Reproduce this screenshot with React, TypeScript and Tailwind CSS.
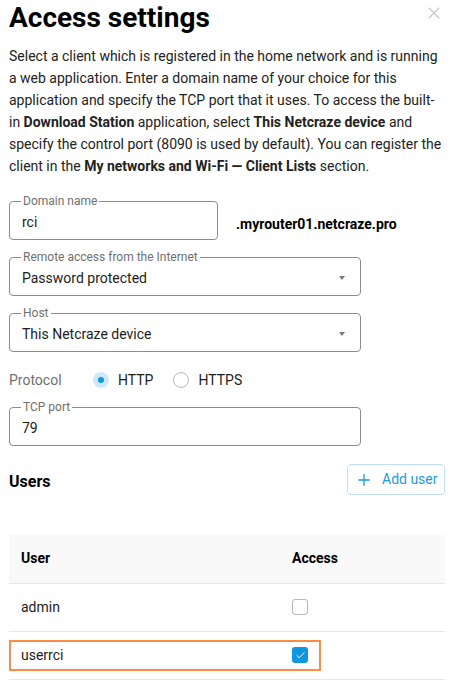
import { Plus, X, Check } from 'lucide-react';

const font = { fontFamily: 'Roboto, "Liberation Sans", sans-serif' };

function Outlined({ label, children, className = '' }: { label: string; children: React.ReactNode; className?: string }) {
  return (
    <fieldset className={`border border-[#8c8c8c] rounded-[4px] px-[12px] m-0 min-w-0 ${className}`}>
      <legend className="text-[12px] leading-[14px] text-[#6f6f6f] px-[2px] ml-[-1px]">{label}</legend>
      {children}
    </fieldset>
  );
}

function SelectField({ label, value }: { label: string; value: string }) {
  return (
    <Outlined label={label} className="w-[352px]">
      <div className="h-[31px] pb-[3px] flex items-center justify-between text-[14px] text-[#1c1c1c]">
        <span>{value}</span>
        <svg width="6" height="4" viewBox="0 0 6 4" className="mr-[3px]">
          <path d="M0 0h6L3 4z" fill="#7a7a7a" />
        </svg>
      </div>
    </Outlined>
  );
}

export default function App() {
  return (
    <div style={font} className="w-[452px] h-[686px] bg-white overflow-hidden relative pl-[9px] pr-[7px] text-[#1c1c1c]">
      <X className="absolute right-[8px] top-[3px] w-[20px] h-[20px] text-[#c4c4c4]" strokeWidth={1.3} />
      <h1 className="text-[28px] leading-[34px] font-bold text-black mt-[1px]">Access settings</h1>
      <p className="text-[14px] leading-[22px] mt-[10px] text-[#222] w-[442px]">
        Select a client which is registered in the home network and is running<br />a web application. Enter a domain name of your choice for this application and specify the TCP port that it uses. To access the built-<br />in <b className="font-bold">Download Station</b> application, select <b className="font-bold">This Netcraze device</b> and specify the control port (8090 is used by default). You can register the<br />client in the <b className="font-bold">My networks and Wi-Fi — Client Lists</b> section.
      </p>

      <div className="flex items-center mt-[17px] gap-[18px]">
        <Outlined label="Domain name" className="w-[209px]">
          <div className="h-[31px] pb-[3px] flex items-center text-[14px]">rci</div>
        </Outlined>
        <span className="text-[14px] font-bold text-black mt-[14px]">.myrouter01.netcraze.pro</span>
      </div>

      <div className="mt-[10px]">
        <SelectField label="Remote access from the Internet" value="Password protected" />
      </div>
      <div className="mt-[10px]">
        <SelectField label="Host" value="This Netcraze device" />
      </div>

      <div className="flex items-center h-[20px] mt-[18px] text-[14px]">
        <span className="text-[#6f6f6f] w-[84px]">Protocol</span>
        <div className="flex items-center gap-[9px]">
          <span className="w-[16px] h-[16px] rounded-full bg-[#cfe8f8] flex items-center justify-center">
            <span className="w-[6px] h-[6px] rounded-full bg-[#0f96e0]" />
          </span>
          <span>HTTP</span>
        </div>
        <div className="flex items-center gap-[9px] ml-[20px]">
          <span className="w-[16px] h-[16px] rounded-full border border-[#b8b8b8]" />
          <span>HTTPS</span>
        </div>
      </div>

      <div className="mt-[10px]">
        <Outlined label="TCP port" className="w-[352px]">
          <div className="h-[31px] pb-[3px] flex items-center text-[14px]">79</div>
        </Outlined>
      </div>

      <div className="flex items-center justify-between mt-[18px]">
        <span className="text-[16px] font-bold text-black mt-[4px]">Users</span>
        <button className="h-[31px] w-[98px] pl-[7px] flex items-center gap-[9px] border border-[#bfe0f4] rounded-[4px] text-[#1a9be3] text-[14px]">
          <Plus className="w-[18px] h-[18px]" strokeWidth={1.8} />
          Add user
        </button>
      </div>

      <table className="w-full mt-[40px] text-[14px] border-collapse">
        <thead>
          <tr className="bg-[#f9f9f9] border-b border-[#e6e6e6] h-[48px]">
            <th className="text-left font-bold pl-[12px] w-[283px] text-black">User</th>
            <th className="text-left font-bold text-black">Access</th>
          </tr>
        </thead>
        <tbody>
          <tr className="border-b border-[#e6e6e6] h-[48px]">
            <td className="pl-[12px]">admin</td>
            <td>
              <span className="block w-[16px] h-[16px] rounded-[3px] border border-[#b8b8b8]" />
            </td>
          </tr>
          <tr className="border-b border-[#e6e6e6] h-[48px]">
            <td colSpan={2} className="p-0">
              <div className="flex items-center w-[312px] h-[31px] border-2 border-[#ff8a45] pl-[10px]">
                <span className="w-[271px]">userrci</span>
                <span className="w-[16px] h-[16px] rounded-[3px] bg-[#0f96e0] flex items-center justify-center">
                  <Check className="w-[11px] h-[11px] text-white" strokeWidth={2} />
                </span>
              </div>
            </td>
          </tr>
        </tbody>
      </table>
    </div>
  );
}
